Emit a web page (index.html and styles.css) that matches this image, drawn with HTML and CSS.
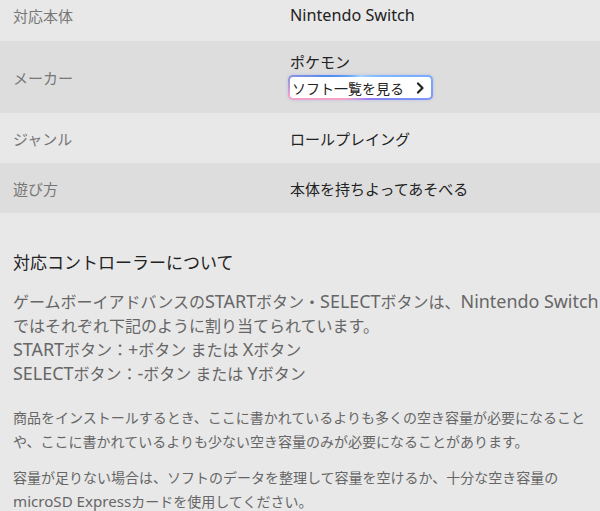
FILE: index.html
```html
<!DOCTYPE html>
<html lang="ja">
<head>
<meta charset="utf-8">
<link rel="stylesheet" href="styles.css">
</head>
<body>
<div class="page">
  <div class="spec">
    <div class="row light first">
      <div class="label">対応本体</div>
      <div class="value"><span class="latin">Nintendo Switch</span></div>
    </div>
    <div class="row dark maker">
      <div class="label">メーカー</div>
      <div class="value">
        <div class="maker-name">ポケモン</div>
        <a class="soft-btn">ソフト一覧を見る<svg class="chev" width="10" height="12" viewBox="0 0 10 12"><path d="M3 1.5 L7.5 6 L3 10.5" fill="none" stroke="#222" stroke-width="2.2" stroke-linecap="round" stroke-linejoin="round"/></svg></a>
      </div>
    </div>
    <div class="row light">
      <div class="label">ジャンル</div>
      <div class="value">ロールプレイング</div>
    </div>
    <div class="row dark">
      <div class="label">遊び方</div>
      <div class="value">本体を持ちよってあそべる</div>
    </div>
  </div>
  <div class="info">
    <h2 class="heading">対応コントローラーについて</h2>
    <p class="desc">ゲームボーイアドバンスの<span class="latin">START</span>ボタン・<span class="latin">SELECT</span>ボタンは、<span class="latin">Nintendo Switch</span><br>ではそれぞれ下記のように割り当てられています。<br><span class="latin">START</span>ボタン：<span class="latin">+</span>ボタン または <span class="latin">X</span>ボタン<br><span class="latin">SELECT</span>ボタン：<span class="latin">-</span>ボタン または <span class="latin">Y</span>ボタン</p>
    <p class="note">商品をインストールするとき、ここに書かれているよりも多くの空き容量が必要になること<br>や、ここに書かれているよりも少ない空き容量のみが必要になることがあります。</p>
    <p class="note">容量が足りない場合は、ソフトのデータを整理して容量を空けるか、十分な空き容量の<br><span class="latin">microSD Express</span>カードを使用してください。</p>
  </div>
</div>
</body>
</html>
```

FILE: styles.css
```css
html, body {
  margin: 0;
  padding: 0;
  background: #e8e8e8;
}
body {
  font-family: "Noto Sans", "Noto Sans CJK JP", sans-serif;
  width: 600px;
  height: 511px;
  overflow: hidden;
}
.page {
  margin-top: -9px;
}
.latin {
  font-size: 1.08em;
  line-height: 1;
}
.desc .latin {
  font-size: 1.12em;
}
.row {
  display: flex;
  align-items: center;
  height: 50px;
  font-size: 15px;
}
.row.first {
  padding-bottom: 2px;
  height: 48px;
}
.row.light { background: #e8e8e8; }
.row.dark { background: #dddddd; }
.row.maker { height: 72px; }
.label {
  width: 277px;
  padding-left: 13px;
  color: #777;
}
.value {
  color: #222;
}
.maker-name {
  line-height: 20px;
  margin-top: -2px;
  margin-bottom: 3px;
}
.soft-btn {
  display: inline-flex;
  align-items: center;
  height: 21px;
  padding: 0 6px 0 2px;
  margin-left: -2px;
  font-size: 14px;
  color: #222;
  border: 2px solid transparent;
  border-radius: 5px;
  background:
    linear-gradient(#fff, #fff) padding-box,
    conic-gradient(from 0deg, #a8d4ff, #7ab4ff 20%, #7d8cf5 30%, #9a7ef0 40%, #c79ae6 55%, #f7a4c4 66%, #f0a0c8 73%, #4e8cf0 80%, #7ab8ff 92%, #a8d4ff) border-box;
  box-shadow: 0 0 3px rgba(140, 140, 240, 0.45);
}
.chev {
  margin-left: 11px;
}
.info {
  padding-left: 13px;
}
.heading {
  margin: 38px 0 0;
  font-size: 17px;
  font-weight: normal;
  line-height: 24px;
  color: #222;
}
.desc {
  margin: 15px 0 0;
  font-size: 16px;
  line-height: 24px;
  color: #666;
  white-space: nowrap;
}
.note {
  font-size: 14px;
  line-height: 24px;
  color: #666;
  white-space: nowrap;
}
.desc + .note {
  margin: 20px 0 0;
}
.note + .note {
  margin: 12px 0 0;
}
```
